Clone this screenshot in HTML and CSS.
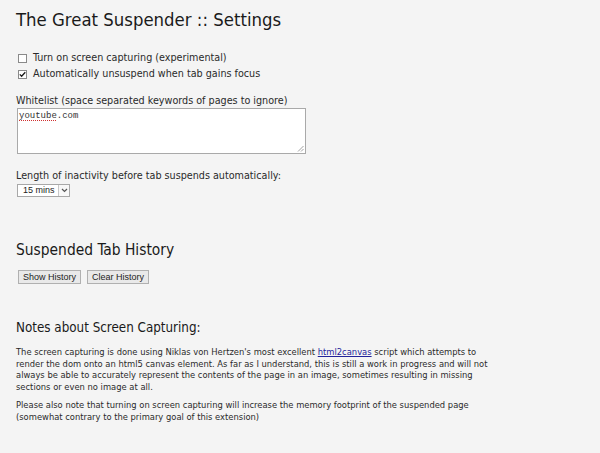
FILE: index.html
```html
<!DOCTYPE html>
<html>
<head>
<meta charset="utf-8">
<title>The Great Suspender :: Settings</title>
<link rel="stylesheet" href="styles.css">
</head>
<body>
<h1 class="title">The Great Suspender :: Settings</h1>

<div class="options">
  <label class="check-row">
    <span class="box"></span>
    <span class="check-label">Turn on screen capturing (experimental)</span>
  </label>
  <label class="check-row">
    <span class="box"><svg width="7" height="7" viewBox="0 0 7 7"><path d="M0.8 3.4 L2.6 5.3 L6.3 1.2" fill="none" stroke="#1a1a1a" stroke-width="1.3"/></svg></span>
    <span class="check-label">Automatically unsuspend when tab gains focus</span>
  </label>
</div>

<div class="field">
  <div class="field-label">Whitelist (space separated keywords of pages to ignore)</div>
  <div class="textarea"><span class="misspelt">youtube</span>.com<svg class="grip" width="7" height="7" viewBox="0 0 7 7"><path d="M6.5 1 L1 6.5 M6.5 4 L4 6.5" stroke="#a0a0a0" stroke-width="1"/></svg></div>
</div>

<div class="field">
  <div class="field-label">Length of inactivity before tab suspends automatically:</div>
  <div class="select"><span class="select-text">15 mins</span><span class="select-arrow"><svg width="7" height="5" viewBox="0 0 7 5"><path d="M1 1 L3.5 3.5 L6 1" fill="none" stroke="#555" stroke-width="1.2"/></svg></span></div>
</div>

<h2 class="section-title">Suspended Tab History</h2>
<div class="buttons">
  <button class="btn">Show History</button>
  <button class="btn">Clear History</button>
</div>

<h3 class="notes-title">Notes about Screen Capturing:</h3>
<p class="note">The screen capturing is done using Niklas von Hertzen's most excellent <a class="link" href="#">html2canvas</a> script which attempts to render the dom onto an html5 canvas element. As far as I understand, this is still a work in progress and will not always be able to accurately represent the contents of the page in an image, sometimes resulting in missing sections or even no image at all.</p>
<p class="note">Please also note that turning on screen capturing will increase the memory footprint of the suspended page (somewhat contrary to the primary goal of this extension)</p>
</body>
</html>
```

FILE: styles.css
```css
html, body {
  margin: 0;
  padding: 0;
  background: #f4f4f4;
}
body {
  padding: 0 16px;
  font-family: "DejaVu Sans Condensed", "DejaVu Sans", sans-serif;
  font-size: 10.7px;
  color: #2a2a2a;
}
.title {
  font-weight: normal;
  font-size: 18.4px;
  color: #1a1a1a;
  margin: 8px 0 0;
  line-height: 24px;
}
.options {
  margin-top: 20px;
  display: flex;
  flex-direction: column;
  gap: 4px;
}
.check-row {
  display: flex;
  align-items: center;
  gap: 6px;
  height: 12px;
  line-height: 12px;
}
.box {
  width: 7px;
  height: 7px;
  border: 1px solid #8a8a8a;
  background: #fff;
  margin-left: 2px;
  display: flex;
  align-items: center;
  justify-content: center;
  flex-shrink: 0;
}
.field {
  margin-top: 15px;
}
.field + .field {
  margin-top: 16px;
}
.field-label {
  line-height: 12px;
}
.textarea {
  position: relative;
  margin-top: 1px;
  margin-left: 1px;
  width: 289px;
  height: 46px;
  background: #fff;
  border: 1px solid #a9a9a9;
  font-family: "Liberation Mono", monospace;
  font-size: 9px;
  line-height: 11px;
  color: #333;
  padding: 2px 1px;
  box-sizing: border-box;
}
.misspelt {
  text-decoration: underline dotted #d03030;
  text-decoration-thickness: 1px;
  text-underline-offset: 2px;
}
.grip {
  position: absolute;
  right: 1px;
  bottom: 1px;
}
.select {
  display: flex;
  width: 53px;
  margin-left: 1px;
  margin-top: 2px;
  height: 13px;
  border: 1px solid #a8a8a8;
  background: #fff;
  box-sizing: border-box;
}
.select-text {
  flex: 1;
  font-family: "Liberation Sans", sans-serif;
  font-size: 9px;
  padding-left: 5px;
  line-height: 11px;
  color: #222;
}
.select-arrow {
  width: 10px;
  border-left: 1px solid #c8c8c8;
  display: flex;
  align-items: center;
  justify-content: center;
  background: #f8f8f8;
}
.section-title {
  font-weight: normal;
  font-size: 15.4px;
  color: #1a1a1a;
  line-height: 20px;
  margin: 43px 0 0;
}
.buttons {
  margin-top: 10px;
  display: flex;
  gap: 6px;
  margin-left: 2px;
}
.btn {
  font-family: "Liberation Sans", sans-serif;
  font-size: 9px;
  color: #222;
  background: #e9e9e9;
  border: 1px solid #b0b0b0;
  height: 14px;
  padding: 0 4px;
  margin: 0;
  line-height: 12px;
}
.notes-title {
  font-weight: normal;
  font-size: 13.3px;
  color: #1a1a1a;
  line-height: 18px;
  margin: 35px 0 0;
}
.note {
  font-size: 9.3px;
  margin: 9px 0 0;
  line-height: 11.6px;
  max-width: 480px;
}
.note + .note {
  margin-top: 7px;
}
.link {
  color: #22229a;
}
```
